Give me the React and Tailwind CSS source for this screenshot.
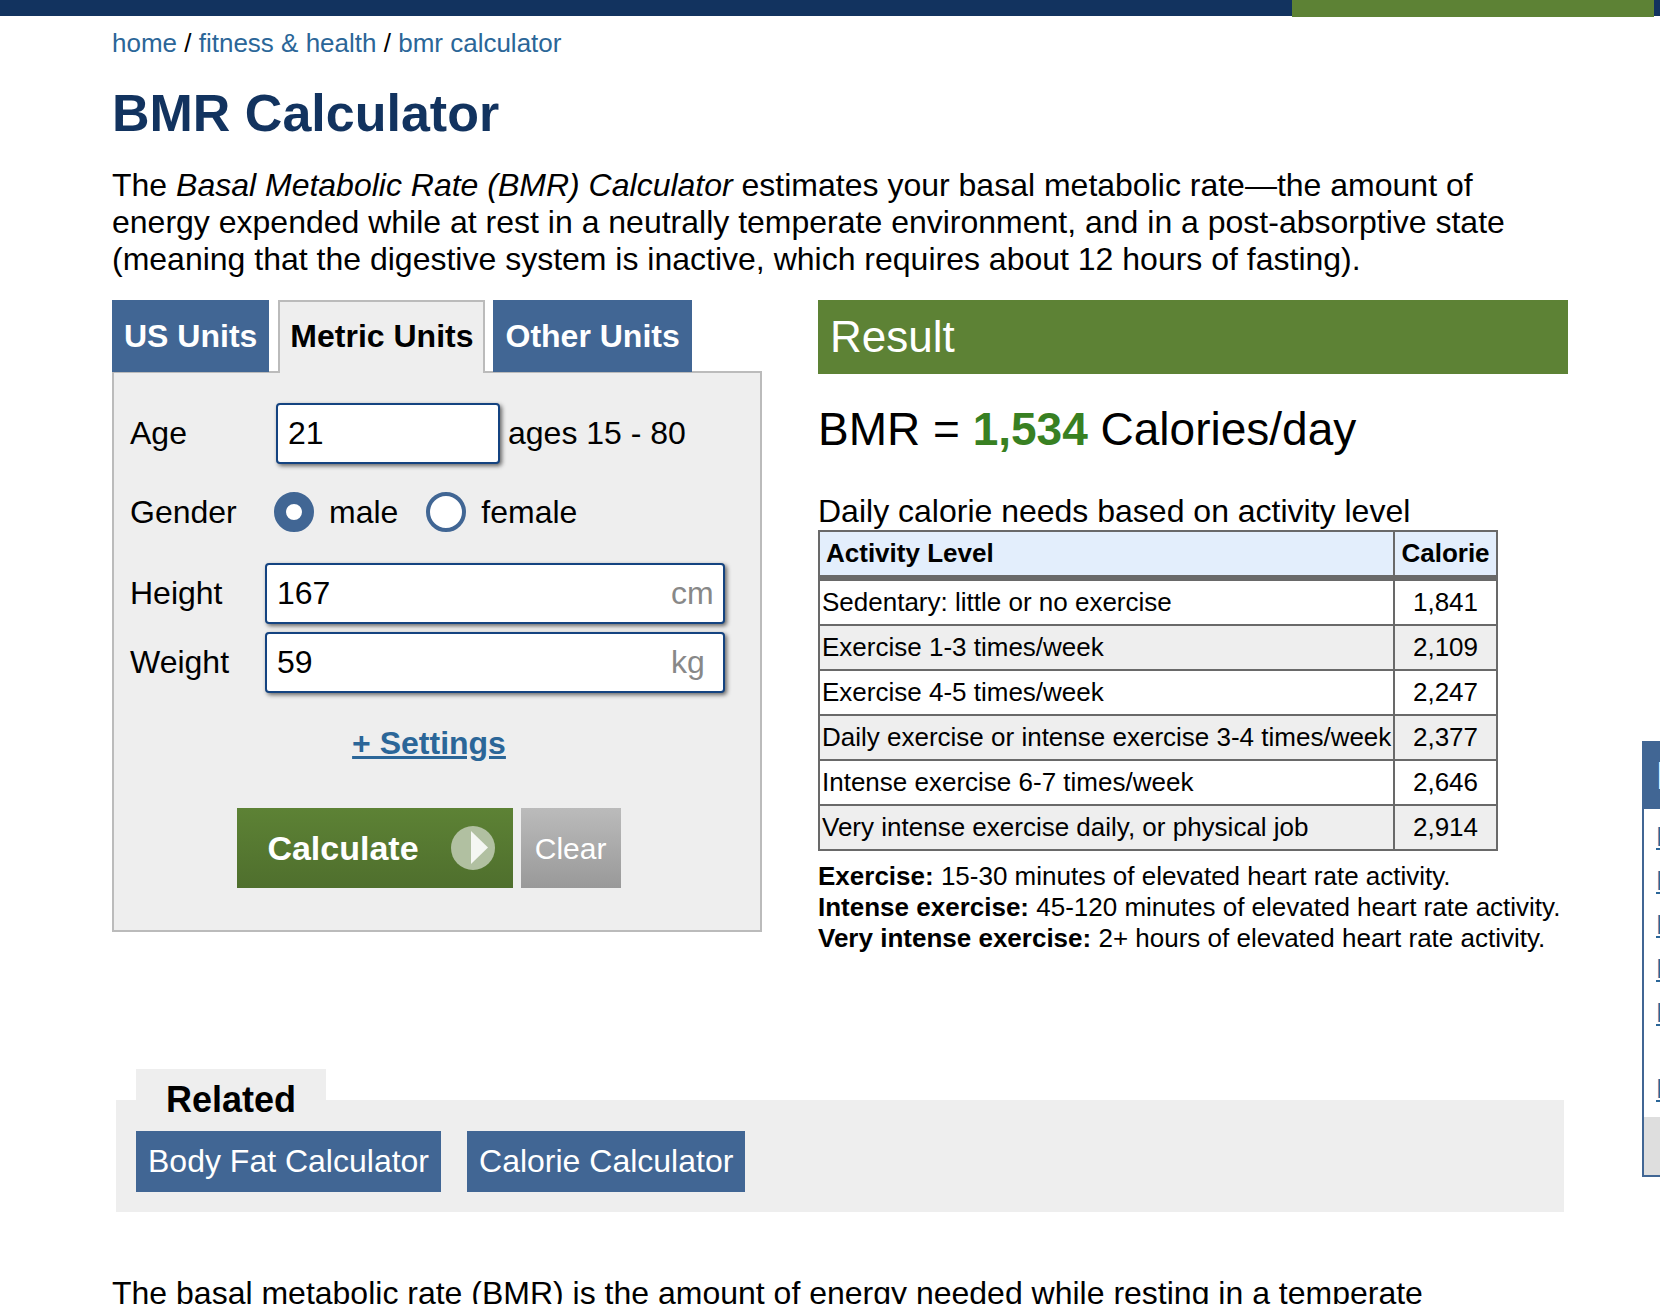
import { useState } from "react";

const activityRows = [
  ["Sedentary: little or no exercise", "1,841"],
  ["Exercise 1-3 times/week", "2,109"],
  ["Exercise 4-5 times/week", "2,247"],
  ["Daily exercise or intense exercise 3-4 times/week", "2,377"],
  ["Intense exercise 6-7 times/week", "2,646"],
  ["Very intense exercise daily, or physical job", "2,914"],
];

const notes = [
  ["Exercise:", "15-30 minutes of elevated heart rate activity."],
  ["Intense exercise:", "45-120 minutes of elevated heart rate activity."],
  ["Very intense exercise:", "2+ hours of elevated heart rate activity."],
];

const fieldClass =
  "h-[61px] rounded-[4px] border-2 border-[#144380] bg-white px-[10px] shadow-[2px_2px_4px_#666] outline-none";

function Breadcrumbs() {
  return (
    <nav aria-label="Breadcrumb" className="text-[26px] leading-[30px]">
      <a href="#home" className="text-[#2b6698]">home</a>
      {" / "}
      <a href="#fitness" className="text-[#2b6698]">fitness &amp; health</a>
      {" / "}
      <a href="#bmr" className="text-[#2b6698]">bmr calculator</a>
    </nav>
  );
}

function UnitTabs() {
  return (
    <div className="relative z-10 -mb-[2px] flex items-start gap-2 font-bold">
      <button type="button" className="mr-px h-[72px] bg-[#416694] px-3 text-white">
        US Units
      </button>
      <button
        type="button"
        className="h-[73px] border-2 border-b-0 border-[#bbb] bg-[#eee] px-[10px] pb-[2px]"
      >
        Metric Units
      </button>
      <button type="button" className="h-[72px] bg-[#416694] px-3 text-white">
        Other Units
      </button>
    </div>
  );
}

function GenderOption({ value, checked, onSelect }) {
  return (
    <label className="flex items-center gap-[15px]">
      <input
        type="radio"
        name="gender"
        value={value}
        checked={checked}
        onChange={() => onSelect(value)}
        className="size-10 appearance-none rounded-full border-4 border-[#416694] bg-white checked:border-12"
      />
      {value}
    </label>
  );
}

function MeasureField({ id, label, unit, initial }) {
  return (
    <>
      <label htmlFor={id}>{label}</label>
      <div className="relative">
        <input id={id} defaultValue={initial} className={`${fieldClass} w-full`} />
        <span className="pointer-events-none absolute inset-y-0 right-0 flex w-[54px] items-center text-[#888]">
          {unit}
        </span>
      </div>
    </>
  );
}

function CalculatorForm() {
  const [gender, setGender] = useState("male");
  return (
    <form
      onSubmit={(event) => event.preventDefault()}
      className="border-2 border-[#bbb] bg-[#eee] pt-[30px] pr-8 pb-[42px] pl-4"
    >
      <div className="mr-[3px] grid grid-cols-[135px_minmax(0,1fr)] items-center">
        <label htmlFor="age">Age</label>
        <div className="flex items-center gap-2 pl-[11px]">
          <input id="age" defaultValue="21" className={`${fieldClass} w-[224px]`} />
          <span>ages 15 - 80</span>
        </div>
        <span id="gender-label" className="mt-7 mb-[31px]">Gender</span>
        <div
          role="radiogroup"
          aria-labelledby="gender-label"
          className="mt-7 mb-[31px] flex gap-7 pl-[9px]"
        >
          <GenderOption value="male" checked={gender === "male"} onSelect={setGender} />
          <GenderOption value="female" checked={gender === "female"} onSelect={setGender} />
        </div>
        <MeasureField id="height" label="Height" unit="cm" initial="167" />
        <div className="col-span-2 h-2" />
        <MeasureField id="weight" label="Weight" unit="kg" initial="59" />
      </div>
      <div className="mt-8 text-center">
        <a href="#settings" className="font-bold text-[#2b6698] underline">+ Settings</a>
      </div>
      <div className="mt-[46px] flex justify-center gap-2">
        <button
          type="submit"
          className="flex h-20 items-center bg-linear-to-b from-[#5d8235] to-[#4f6f2d] pr-[18px] pl-[30px] text-[34px] font-bold text-white"
        >
          Calculate
          <svg viewBox="0 0 44 44" className="ml-8 size-11" aria-hidden="true">
            <circle cx="22" cy="22" r="22" fill="#b1c0a1" />
            <path d="M20 5v33l17-16.500z" fill="#f5f7f3" />
          </svg>
        </button>
        <button
          type="reset"
          className="h-20 w-[100px] bg-linear-to-b from-[#bbb] to-[#999] text-[30px] text-white"
        >
          Clear
        </button>
      </div>
    </form>
  );
}

function Results() {
  return (
    <section>
      <h2 className="flex h-[74px] items-center bg-[#5d8235] px-3 pb-[2px] text-[44px] text-white">
        Result
      </h2>
      <p className="mt-[29px] text-[46px] leading-[53px]">
        BMR = <b className="text-[#388022]">1,534</b> Calories/day
      </p>
      <p className="mt-[37px]" id="needs">Daily calorie needs based on activity level</p>
      <table
        aria-labelledby="needs"
        className="w-[680px] border-collapse border-2 border-[#696969] text-[26px] leading-[31px]"
      >
        <thead>
          <tr className="border-b-[6px] border-[#696969] bg-[#e3eefc]">
            <th className="border-r-2 border-[#696969] px-[6px] py-[6px] text-left">Activity Level</th>
            <th className="w-[103px] py-[6px] text-center">Calorie</th>
          </tr>
        </thead>
        <tbody>
          {activityRows.map(([level, calories]) => (
            <tr key={level} className="border-b-2 border-[#696969] even:bg-[#eee]">
              <td className="border-r-2 border-[#696969] py-[6px] pl-[2px] whitespace-nowrap">{level}</td>
              <td className="py-[6px] text-center">{calories}</td>
            </tr>
          ))}
        </tbody>
      </table>
      <div className="mt-[10px] text-[26px] leading-[31px]">
        {notes.map(([term, text]) => (
          <p key={term}>
            <b>{term}</b> {text}
          </p>
        ))}
      </div>
    </section>
  );
}

function Related() {
  return (
    <section className="mx-1 mt-[115px]">
      <h2 className="ml-5 h-[31px] w-[190px] bg-[#eee] pt-[10px] text-center text-[36px] leading-[41px] font-bold">
        Related
      </h2>
      <div className="flex gap-[26px] bg-[#eee] px-5 pt-[31px] pb-5 text-white">
        <a href="#body-fat" className="bg-[#416694] px-3 py-3">Body Fat Calculator</a>
        <a href="#calorie" className="bg-[#416694] px-3 py-3">Calorie Calculator</a>
      </div>
    </section>
  );
}

function Sidebar() {
  return (
    <aside className="mt-[725px] self-start overflow-hidden border-2 border-r-0 border-[#416694] leading-8">
      <h2 className="h-[66px] bg-[#416694] pt-3 pl-3 text-[38px] leading-[42px] text-white">F</h2>
      <ul className="flex flex-col gap-3 pt-3 pb-3 pl-3 text-[28px] text-[#2b6698]">
        <li><a href="#sidebar-1" className="underline">B</a></li>
        <li><a href="#sidebar-2" className="underline">B</a></li>
        <li><a href="#sidebar-3" className="underline">B</a></li>
        <li><a href="#sidebar-4" className="underline">B</a></li>
        <li className="pb-8"><a href="#sidebar-5" className="underline">B</a></li>
        <li><a href="#sidebar-6" className="underline">B</a></li>
      </ul>
      <div className="h-[58px] bg-[#dedede]" />
    </aside>
  );
}

export default function App() {
  return (
    <div className="h-screen overflow-hidden bg-white font-['Liberation_Sans',Arial,sans-serif] text-[32px] leading-[37px] text-black">
      <header className="flex h-4 justify-end bg-[#12335f] pr-[6px]">
        <div className="h-[17px] w-[362px] bg-[#5d8235]" />
      </header>
      <div className="grid grid-cols-[minmax(0,1fr)_18px] gap-[74px] pl-[112px]">
        <main className="pt-3">
          <Breadcrumbs />
          <h1 className="mt-[25px] text-[52px] leading-[60px] font-bold text-[#12335f]">
            BMR Calculator
          </h1>
          <p className="mt-6">
            The <i>Basal Metabolic Rate (BMR) Calculator</i> estimates your basal metabolic
            rate—the amount of energy expended while at rest in a neutrally temperate
            environment, and in a post-absorptive state (meaning that the digestive system is
            inactive, which requires about 12 hours of fasting).
          </p>
          <div className="mt-[22px] grid grid-cols-[650fr_750fr] items-start gap-14">
            <div>
              <UnitTabs />
              <CalculatorForm />
            </div>
            <Results />
          </div>
          <Related />
          <p className="mt-[63px]">
            The basal metabolic rate (BMR) is the amount of energy needed while resting in a temperate
          </p>
        </main>
        <Sidebar />
      </div>
    </div>
  );
}
